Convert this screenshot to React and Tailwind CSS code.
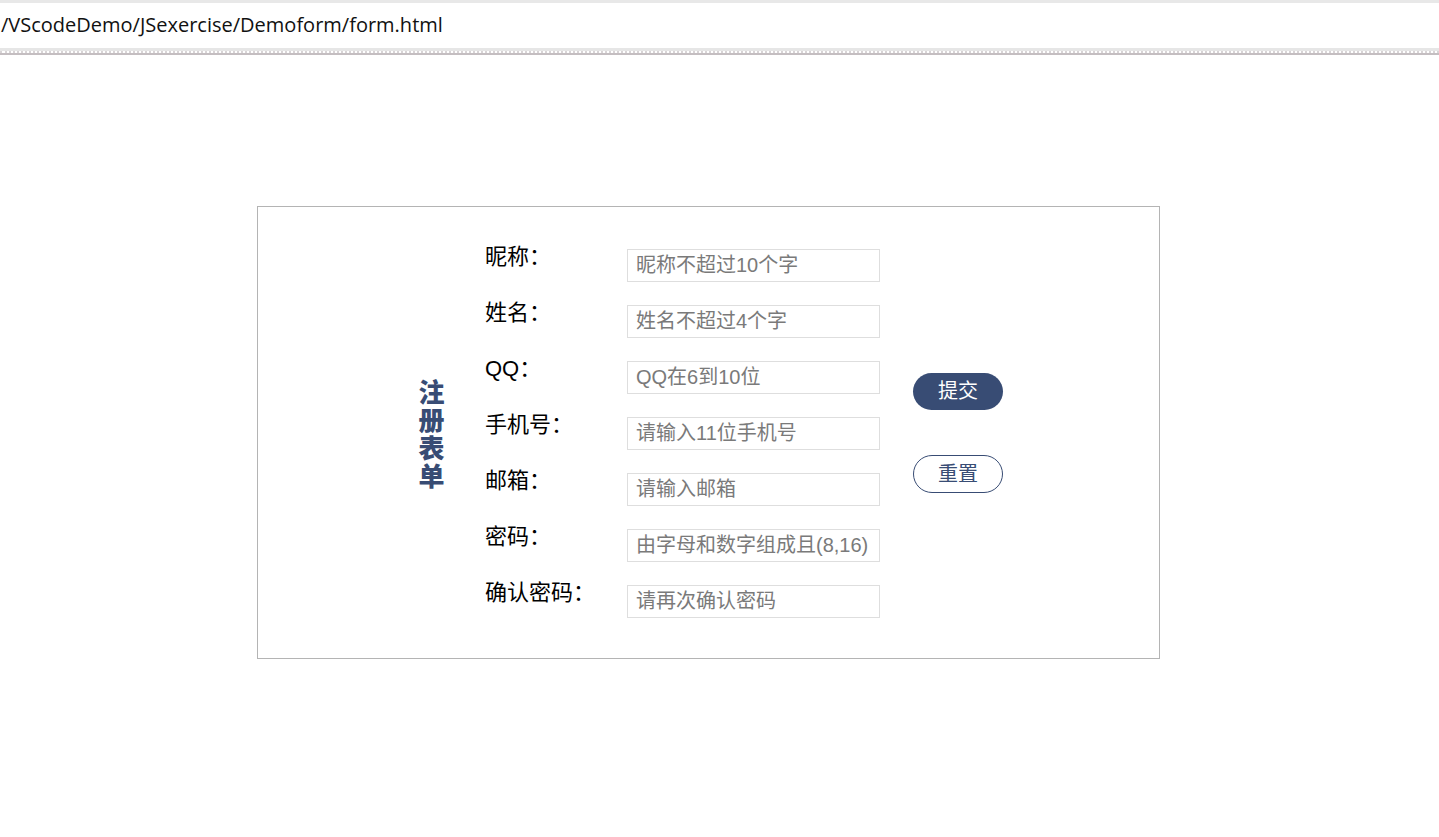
import React from "react";

const rows = [
  ["昵称：", "昵称不超过10个字"],
  ["姓名：", "姓名不超过4个字"],
  ["QQ：", "QQ在6到10位"],
  ["手机号：", "请输入11位手机号"],
  ["邮箱：", "请输入邮箱"],
  ["密码：", "由字母和数字组成且(8,16)"],
  ["确认密码：", "请再次确认密码"],
];

const cjk = '"Liberation Sans", "Noto Sans CJK SC", sans-serif';

export default function App() {
  return (
    <div
      className="min-h-[837px] w-full bg-white text-black"
      style={{ fontFamily: cjk }}
    >
      <div className="border-t-[3px] border-[#e8e8e8] bg-white h-[48px] flex items-center">
        <span
          className="text-[20px] text-[#111] leading-none pl-[1px] pb-[2px]"
          style={{ fontFamily: '"Open Sans", "Noto Sans", sans-serif' }}
        >
          /VScodeDemo/JSexercise/Demoform/form.html
        </span>
      </div>
      <div className="h-[3px] bg-[#e6e6e6]" />
      <div className="h-[2px] border-t-2 border-dotted border-[#d8d4d6]" />
      <div className="h-[2px] bg-[#c4bec1]" />

      <div className="mt-[151px] ml-[257px] w-[903px] h-[453px] border border-[#b4b4b4] flex items-center pl-[160px]">
        <div
          className="w-[27px] text-[26px] leading-[28px] font-black text-[#384c74] break-all text-center"
          style={{ fontFamily: '"Noto Sans CJK SC", sans-serif' }}
        >
          注册表单
        </div>
        <div className="ml-[40px] flex flex-col">
          {rows.map(([label, ph], i) => (
            <div
              key={i}
              className={`flex items-start ${i < rows.length - 1 ? "h-[56px]" : "h-[37px]"}`}
            >
              <div
                className="w-[142px] text-[22px] leading-[22px] text-black"
                style={{ fontFamily: cjk }}
              >
                {label}
              </div>
              <input
                className="mt-[3px] w-[253px] h-[33px] border border-[#dedede] pl-[8px] text-[20px] text-[#333] placeholder:text-[#7a7a7a] outline-none bg-white"
                placeholder={ph}
                style={{ fontFamily: cjk }}
              />
            </div>
          ))}
        </div>
        <div className="ml-[33px] flex flex-col gap-[45px]">
          <button
            className="w-[90px] h-[37px] rounded-full bg-[#384c74] text-white text-[20px] leading-none flex items-center justify-center"
            style={{ fontFamily: cjk }}
          >
            提交
          </button>
          <button
            className="w-[90px] h-[38px] rounded-full border border-[#384c74] bg-white text-[#384c74] text-[20px] leading-none flex items-center justify-center"
            style={{ fontFamily: cjk }}
          >
            重置
          </button>
        </div>
      </div>
    </div>
  );
}
